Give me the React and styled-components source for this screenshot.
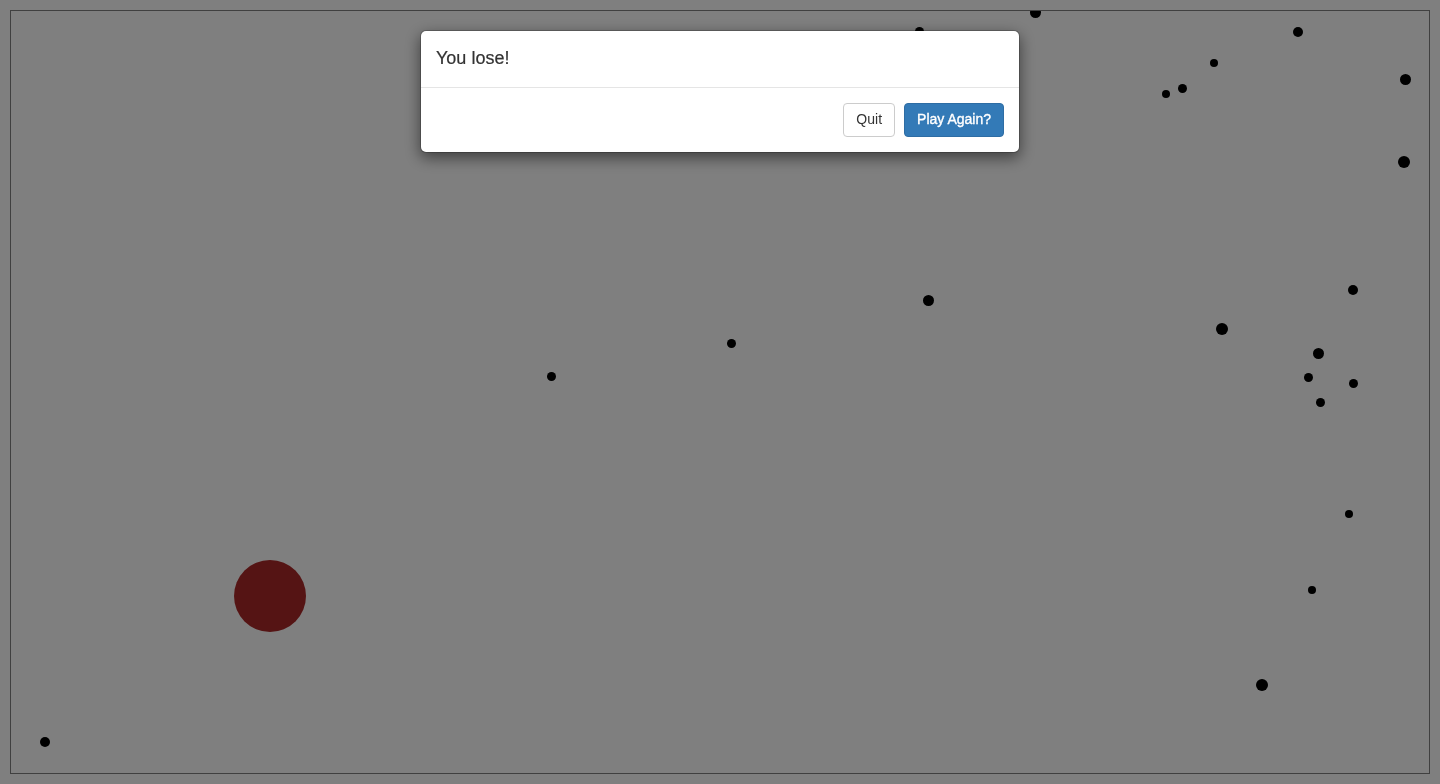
import React from "react";
import styled, { createGlobalStyle } from "styled-components";

const Global = createGlobalStyle`
  html, body { margin: 0; padding: 0; background: #ffffff; }
  body { font-family: "Liberation Sans", Arial, Helvetica, sans-serif; font-size: 14px; color: #333; }
  * { box-sizing: border-box; }
`;

const Page = styled.div`
  padding: 10px;
  width: 1440px;
  height: 784px;
`;

const Field = styled.div`
  position: relative;
  width: 1420px;
  height: 764px;
  border: 1px solid #808080;
  background: #ffffff;
  overflow: hidden;
`;

const Dot = styled.span`
  position: absolute;
  width: ${(p) => p.$d}px;
  height: ${(p) => p.$d}px;
  margin-left: ${(p) => -p.$d / 2}px;
  margin-top: ${(p) => -p.$d / 2}px;
  border-radius: 50%;
  background: ${(p) => p.$color || "#000"};
`;

const Backdrop = styled.div`
  position: fixed;
  inset: 0;
  background: rgba(0, 0, 0, 0.5);
`;

const Dialog = styled.div`
  width: 600px;
  margin: 30px auto;
  background: #fff;
  border: 1px solid rgba(0, 0, 0, 0.2);
  border-radius: 6px;
  box-shadow: 0 5px 15px rgba(0, 0, 0, 0.5);
  background-clip: padding-box;
`;

const Header = styled.div`
  padding: 15px;
  border-bottom: 1px solid #e5e5e5;
`;

const Title = styled.h4`
  margin: 0;
  font-size: 18px;
  font-weight: 500;
  line-height: 1.42857;
  color: #333;
  -webkit-text-stroke: 0.2px #333;
`;

const Footer = styled.div`
  padding: 15px;
  display: flex;
  justify-content: flex-end;
  gap: 9px;
`;

const Button = styled.button`
  font-family: "Liberation Sans", Arial, Helvetica, sans-serif;
  font-size: 14px;
  line-height: 1.42857;
  padding: 6px 12px;
  border-radius: 4px;
  border: 1px solid ${(p) => (p.$primary ? "#2e6da4" : "#ccc")};
  background: ${(p) => (p.$primary ? "#337ab7" : "#fff")};
  color: ${(p) => (p.$primary ? "#fff" : "#333")};
  font-weight: 400;
  -webkit-text-stroke: ${(p) => (p.$primary ? "0.35px #fff" : "0")};
  cursor: pointer;
`;

const dots = [
  [919, 31, 9],
  [1035, 12, 11],
  [1298, 32, 10],
  [1214, 63, 8],
  [1182, 88, 9],
  [1166, 94, 8],
  [1405, 79, 11],
  [1404, 162, 12],
  [1353, 290, 10],
  [928, 300, 11],
  [1222, 329, 12],
  [731, 343, 9],
  [1318, 353, 11],
  [551, 376, 9],
  [1308, 377, 9],
  [1353, 383, 9],
  [1320, 402, 9],
  [1349, 514, 8],
  [1312, 590, 8],
  [1262, 685, 12],
  [45, 742, 10],
];

export default function App() {
  return (
    <>
      <Global />
      <Page>
        <Field>
          {dots.map(([x, y, d], i) => (
            <Dot key={i} $d={d} style={{ left: x - 11, top: y - 11 }} />
          ))}
          <Dot $d={72} $color="#aa2828" style={{ left: 270 - 11, top: 595.5 - 11 }} />
        </Field>
      </Page>
      <Backdrop>
        <Dialog>
          <Header>
            <Title>You lose!</Title>
          </Header>
          <Footer>
            <Button>Quit</Button>
            <Button $primary>Play Again?</Button>
          </Footer>
        </Dialog>
      </Backdrop>
    </>
  );
}
